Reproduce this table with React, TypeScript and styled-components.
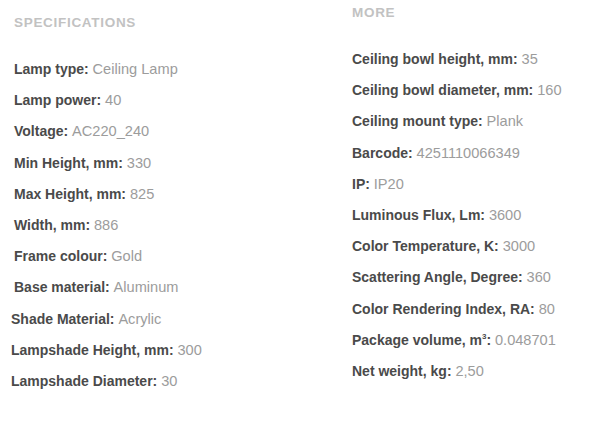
import React from "react";
import styled, { createGlobalStyle } from "styled-components";

const Global = createGlobalStyle`
  html, body { margin: 0; padding: 0; background: #fff; }
  body { font-family: "Liberation Sans", Arial, Helvetica, sans-serif; }
`;

const Page = styled.div`
  display: grid;
  grid-template-columns: 352px 1fr;
  width: 589px;
  height: 424px;
  box-sizing: border-box;
`;

const Column = styled.section<{ $top: number; $left: number }>`
  display: flex;
  flex-direction: column;
  padding-top: ${(p) => p.$top}px;
  padding-left: ${(p) => p.$left}px;
`;

const Heading = styled.h3`
  margin: 0 0 23px 0;
  font-size: 13.5px;
  line-height: 16px;
  font-weight: 700;
  letter-spacing: 0.7px;
  text-transform: uppercase;
  color: #c2c2c2;
`;

const List = styled.ul`
  list-style: none;
  margin: 0;
  padding: 0;
  display: flex;
  flex-direction: column;
`;

const Row = styled.li<{ $indent: number }>`
  font-size: 14px;
  line-height: 31.2px;
  height: 31.2px;
  white-space: nowrap;
  margin-left: ${(p) => p.$indent}px;
`;

const Label = styled.span`
  font-weight: 700;
  color: #4a4a4a;
`;

const Value = styled.span`
  font-size: 14.6px;
  color: #9c9c9c;
`;

const Sup = styled.sup`
  font-size: 8px;
  line-height: 0;
`;

type Item = { label: React.ReactNode; value: string; indent?: number };

const specs: Item[] = [
  { label: "Lamp type:", value: "Ceiling Lamp" },
  { label: "Lamp power:", value: "40" },
  { label: "Voltage:", value: "AC220_240" },
  { label: "Min Height, mm:", value: "330" },
  { label: "Max Height, mm:", value: "825" },
  { label: "Width, mm:", value: "886" },
  { label: "Frame colour:", value: "Gold" },
  { label: "Base material:", value: "Aluminum" },
  { label: "Shade Material:", value: "Acrylic", indent: -3 },
  { label: "Lampshade Height, mm:", value: "300", indent: -3 },
  { label: "Lampshade Diameter:", value: "30", indent: -3 },
];

const more: Item[] = [
  { label: "Ceiling bowl height, mm:", value: "35" },
  { label: "Ceiling bowl diameter, mm:", value: "160" },
  { label: "Ceiling mount type:", value: "Plank" },
  { label: "Barcode:", value: "4251110066349" },
  { label: "IP:", value: "IP20" },
  { label: "Luminous Flux, Lm:", value: "3600" },
  { label: "Color Temperature, K:", value: "3000" },
  { label: "Scattering Angle, Degree:", value: "360" },
  { label: "Color Rendering Index, RA:", value: "80" },
  {
    label: (
      <>
        Package volume, m<Sup>3</Sup>:
      </>
    ),
    value: "0.048701",
  },
  { label: "Net weight, kg:", value: "2,50" },
];

const SpecList = ({ items }: { items: Item[] }) => (
  <List>
    {items.map((it, i) => (
      <Row key={i} $indent={it.indent ?? 0}>
        <Label>{it.label}</Label> <Value>{it.value}</Value>
      </Row>
    ))}
  </List>
);

export default function App() {
  return (
    <>
      <Global />
      <Page>
        <Column $top={15} $left={14}>
          <Heading>Specifications</Heading>
          <SpecList items={specs} />
        </Column>
        <Column $top={5} $left={0}>
          <Heading>More</Heading>
          <SpecList items={more} />
        </Column>
      </Page>
    </>
  );
}
